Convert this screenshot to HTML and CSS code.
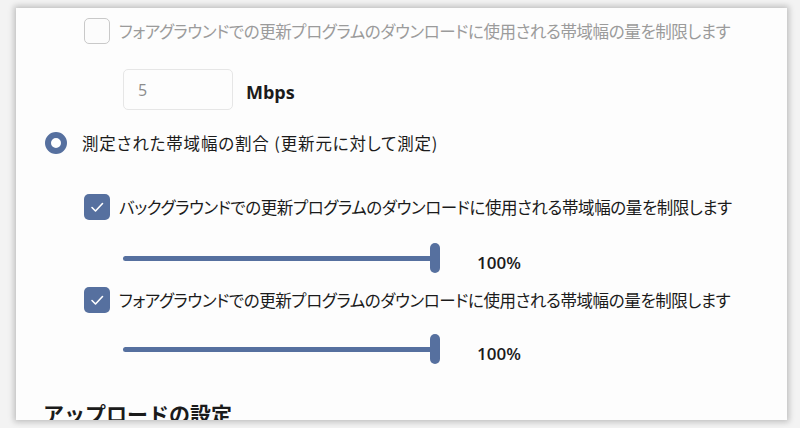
FILE: index.html
```html
<!DOCTYPE html>
<html lang="ja">
<head>
<meta charset="utf-8">
<link rel="stylesheet" href="styles.css">
</head>
<body>
<div class="card">
  <div class="row check-row sub disabled">
    <span class="box"></span>
    <span class="label">フォアグラウンドでの更新プログラムのダウンロードに使用される帯域幅の量を制限します</span>
  </div>
  <div class="row input-row">
    <div class="input">5</div>
    <span class="unit">Mbps</span>
  </div>
  <div class="row radio-row">
    <span class="radio"></span>
    <span class="label">測定された帯域幅の割合 (更新元に対して測定)</span>
  </div>
  <div class="row check-row sub first-check">
    <span class="box checked"><svg width="26" height="26" viewBox="0 0 26 26"><polyline points="8,13.5 11.5,17 18.5,9.5" fill="none" stroke="#fff" stroke-width="1.6" stroke-linecap="round" stroke-linejoin="round"/></svg></span>
    <span class="label">バックグラウンドでの更新プログラムのダウンロードに使用される帯域幅の量を制限します</span>
  </div>
  <div class="row slider-row">
    <div class="slider"><div class="track"></div><div class="thumb"></div></div>
    <span class="value">100%</span>
  </div>
  <div class="row check-row sub second-check">
    <span class="box checked"><svg width="26" height="26" viewBox="0 0 26 26"><polyline points="8,13.5 11.5,17 18.5,9.5" fill="none" stroke="#fff" stroke-width="1.6" stroke-linecap="round" stroke-linejoin="round"/></svg></span>
    <span class="label">フォアグラウンドでの更新プログラムのダウンロードに使用される帯域幅の量を制限します</span>
  </div>
  <div class="row slider-row second-slider">
    <div class="slider"><div class="track"></div><div class="thumb"></div></div>
    <span class="value">100%</span>
  </div>
  <h2 class="heading">アップロードの設定</h2>
</div>
</body>
</html>
```
FILE: styles.css
```css
html, body {
  margin: 0;
  padding: 0;
}
body {
  background: #f3f3f3;
  width: 800px;
  height: 428px;
  overflow: hidden;
  font-family: "Noto Sans CJK JP", "Noto Sans", sans-serif;
  color: #1b1b1b;
}
.card {
  margin: 8px 13px 0 16px;
  height: 412px;
  box-sizing: border-box;
  background: #fdfdfd;
  box-shadow: 0 0 6px 2px rgba(0,0,0,0.22);
  overflow: hidden;
  padding-top: 10px;
  display: flex;
  flex-direction: column;
}
.row {
  display: flex;
  align-items: center;
}
.label {
  font-size: 16.5px;
  font-feature-settings: "palt";
  white-space: nowrap;
  line-height: 20px;
}
.check-row {
  padding-left: 68px;
  height: 26px;
}
.check-row .label {
  margin-left: 9px;
  letter-spacing: -0.4px;
}
.box {
  width: 26px;
  height: 26px;
  box-sizing: border-box;
  border-radius: 5px;
  border: 1.5px solid #c9c9c9;
  background: #fcfcfc;
  flex: none;
  display: flex;
}
.box.checked {
  border: none;
  background: #56709f;
}
.disabled .label {
  color: #9b9b9b;
}
.input-row {
  margin-top: 25px;
  padding-left: 107px;
}
.input {
  width: 110px;
  height: 41px;
  box-sizing: border-box;
  border: 1px solid #e6e6e6;
  border-radius: 5px;
  background: #fdfdfd;
  font-family: "Open Sans", sans-serif;
  font-size: 16px;
  color: #8c8c8c;
  padding-left: 14px;
  display: flex;
  align-items: center;
}
.unit {
  margin-left: 13px;
  font-family: "Open Sans", sans-serif;
  font-weight: 700;
  font-size: 18px;
  color: #1b1b1b;
  padding-top: 5px;
}
.radio-row {
  margin-top: 22px;
  padding-left: 29px;
  height: 22px;
}
.radio {
  width: 22px;
  height: 22px;
  box-sizing: border-box;
  border-radius: 50%;
  border: 6px solid #56709f;
  background: #fff;
  flex: none;
}
.radio-row .label {
  margin-left: 15px;
  letter-spacing: 0.85px;
}
.first-check {
  margin-top: 40px;
}
.slider-row {
  margin-top: 23px;
  padding-left: 107px;
  height: 30px;
}
.slider {
  position: relative;
  width: 317px;
  height: 30px;
  flex: none;
}
.track {
  position: absolute;
  left: 0;
  right: 5px;
  top: 13px;
  height: 5px;
  border-radius: 3px;
  background: #56709f;
}
.thumb {
  position: absolute;
  right: 0;
  top: 0;
  width: 10px;
  height: 30px;
  border-radius: 5px;
  background: #56709f;
}
.value {
  margin-left: 37px;
  font-family: "Open Sans", sans-serif;
  font-weight: 600;
  font-size: 17px;
  padding-top: 8px;
}
.second-check {
  margin-top: 14px;
}
.second-slider {
  margin-top: 21px;
}
.heading {
  margin: 34px 0 0 27px;
  font-size: 21px;
  font-weight: 700;
  line-height: 30px;
  white-space: nowrap;
}
```
